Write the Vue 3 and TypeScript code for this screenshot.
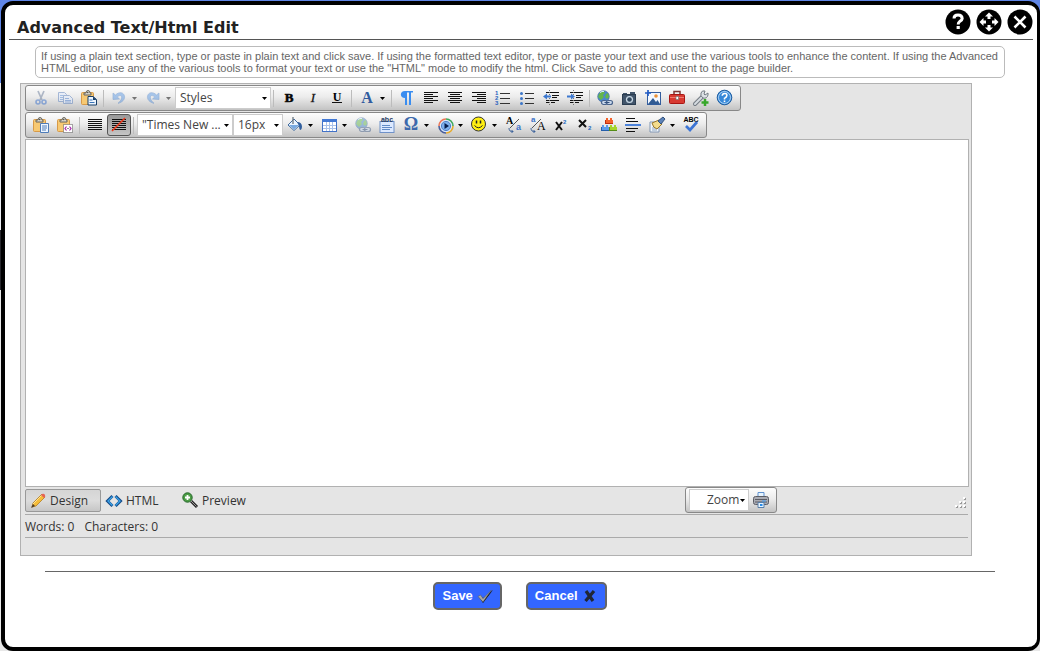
<script setup lang="ts">
import { ref, computed } from 'vue'

interface Item {
  kind: 'button' | 'split' | 'sep' | 'select'
  icon?: string
  label?: string
  active?: boolean
  dim?: boolean
  size?: 'wide' | 'narrow'
  options?: string[]
}

const content = ref('')
const mode = ref('Design')
const words = computed(() => content.value.split(/\s+/).filter(Boolean).length)

const btn = (icon: string, label: string, extra: Partial<Item> = {}): Item => ({ kind: 'button', icon, label, ...extra })
const split = (icon: string, label: string, extra: Partial<Item> = {}): Item => ({ kind: 'split', icon, label, ...extra })
const sep: Item = { kind: 'sep' }

const rows: Item[][] = [
  [
    btn('cut', 'Cut', { dim: true }), btn('copy', 'Copy', { dim: true }), btn('paste', 'Paste'), sep,
    split('undo', 'Undo', { dim: true }), split('redo', 'Redo', { dim: true }),
    { kind: 'select', label: 'Styles', size: 'wide', options: ['Styles', 'Heading', 'Quote'] }, sep,
    btn('bold', 'Bold'), btn('italic', 'Italic'), btn('underline', 'Underline'), sep,
    split('color', 'Text color'), sep,
    btn('pilcrow', 'Paragraph'), btn('left', 'Align left'), btn('center', 'Align center'), btn('right', 'Align right'),
    btn('ol', 'Numbered list'), btn('ul', 'Bulleted list'), btn('outdent', 'Outdent'), btn('indent', 'Indent'), sep,
    btn('link', 'Insert link'), btn('camera', 'Insert media'), btn('image', 'Image map'), btn('toolbox', 'Toolbox'),
    btn('wrench', 'Add tool'), btn('help', 'Help')
  ],
  [
    btn('pasteText', 'Paste plain text'), btn('pasteHtml', 'Paste as HTML'), sep,
    btn('justify', 'Justify'), btn('justifyNone', 'No justification', { active: true }), sep,
    { kind: 'select', label: 'Font', size: 'wide', options: ['"Times New ...', 'Arial', 'Verdana'] },
    { kind: 'select', label: 'Font size', size: 'narrow', options: ['16px', '12px', '14px'] },
    split('bucket', 'Background color'), split('table', 'Insert table'), btn('link', 'Remove link', { dim: true }),
    btn('abcForm', 'Insert snippet'), split('omega', 'Insert symbol'), split('media', 'Insert video'), split('smile', 'Insert emoticon'),
    btn('lower', 'Lower case'), btn('upper', 'Upper case'), btn('sup', 'Superscript'), btn('sub', 'Subscript'),
    btn('blocks', 'Modules'), btn('rule', 'Horizontal rule'), split('brush', 'Format stripper'), btn('spell', 'Spell check')
  ]
]

const line = (d: string, color = '#111') => `<path d="${d}" stroke="${color}" fill="none" shape-rendering="crispEdges"/>`
const clip = '<rect x="0.5" y="2.500" width="12" height="12" rx="1" fill="#f7c973" stroke="#d79a48"/><path d="M3 5V3h2q0-2.500 2-2.500T9 3h1v2z" fill="#d9d6cc" stroke="#68655c"/><circle cx="6.700" cy="2.500" r="0.8" fill="#555"/>'
const nums = (n: string, y: number) => `<text x="0" y="${y}" font-family="Liberation Sans" font-size="6" font-weight="700" fill="#2862bd">${n}</text>`
const brick = (x: number, y: number, fill: string, edge: string) =>
  `<path d="M${x} ${y + 2}h1v-2h2v2h2v-2h2v2h1v4h-8z" fill="${fill}"/><path d="M${x} ${y + 5.5}h8" stroke="${edge}"/><path d="M${x + 0.5} ${y + 2}v4" stroke="${edge}"/>`

const icons: Record<string, string> = {
  cut: '<path d="M5 1l4 9M11 1l-4 9" stroke="#6b7d9b" stroke-width="1.7" fill="none"/><circle cx="5" cy="12" r="2" stroke="#3970cc" stroke-width="1.6" fill="none"/><circle cx="11" cy="12" r="2" stroke="#3970cc" stroke-width="1.6" fill="none"/>',
  copy: '<path d="M1.500 2.500h6l2 2v7h-8z" fill="#e0ebff" stroke="#5b80bd"/><path d="M3 5.500h4M3 7.500h4M3 9.500h3" stroke="#5d8fda"/><path d="M6.500 5.500h6l3 3v5h-9z" fill="#e0ebff" stroke="#5b80bd"/><path d="M8 8.500h4M8 10.500h6M8 12h6" stroke="#4e80d0"/>',
  paste: clip + '<path d="M7 6.500h5l3.500 3v5.500H7z" fill="#eef6ff" stroke="#173e69"/><path d="M12 6.500v3.500h3.500" fill="#173e69"/><path d="M8.500 10h3M8.500 12.500h5" stroke="#3974b8"/>',
  pasteText: clip + '<path d="M7.500 6.500h8v9h-8z" fill="#eef6ff" stroke="#4e7cb8"/><path d="M9 9h5M9 11h5M9 13h4" stroke="#4e7cb8"/>',
  pasteHtml: clip + '<rect x="6.500" y="7.500" width="9" height="8" fill="#fff" stroke="#555" stroke-dasharray="1 1"/><path d="M9.500 9.500L8 11.500l1.500 2M12.500 9.500l1.500 2-1.500 2" stroke="#a626aa" fill="none" stroke-width="1.200"/><path d="M10.500 11.500h1" stroke="#222"/>',
  undo: '<path d="M2 3l0 6.500 6.500-.5-2.200-2c2.500-2.500 5-1.500 4.200 1.300-.5 2-1.500 3.500-3.500 5 4.500-1 7-4 6.500-7C12.700 2 8 1.500 4.500 5z" fill="#5f9be5" stroke="#457bc4" stroke-width=".7"/>',
  redo: '<path d="M14 3l0 6.500-6.500-.5 2.200-2c-2.500-2.500-5-1.500-4.200 1.300.5 2 1.500 3.500 3.500 5-4.500-1-7-4-6.500-7C3.300 2 8 1.500 11.500 5z" fill="#5f9be5" stroke="#457bc4" stroke-width=".7"/>',
  bold: '<text x="8" y="12" text-anchor="middle" font-family="Liberation Serif" font-size="13" font-weight="700" stroke="#111" stroke-width=".6">B</text>',
  italic: '<text x="8" y="12" text-anchor="middle" font-family="Liberation Serif" font-size="13" font-style="italic" stroke="#333" stroke-width=".3">I</text>',
  underline: '<text x="8" y="11" text-anchor="middle" font-family="Liberation Serif" font-size="12" font-weight="700">U</text>' + line('M3 12.500h10'),
  color: '<text x="8" y="13" text-anchor="middle" font-family="Liberation Serif" font-size="16" font-weight="700" fill="#315b9e">A</text>',
  pilcrow: '<path d="M14 1H6C0.500 1 0.500 8 6 8v7h2V2.500h2V15h2V2.500h2z" fill="#3a8df0"/>',
  left: line('M1 2.500h14M1 4.500h9M1 6.500h14M1 8.500h9M1 10.500h14M1 12.500h9'),
  center: line('M1 2.500h14M3 4.500h10M1 6.500h14M3 8.500h10M1 10.500h14M3 12.500h10'),
  right: line('M1 2.500h14M6 4.500h9M1 6.500h14M6 8.500h9M1 10.500h14M6 12.500h9'),
  justify: line('M1 2.500h14M1 4.500h14M1 6.500h14M1 8.500h14M1 10.500h14M1 12.500h14'),
  justifyNone: line('M1 2.500h14M1 4.500h14M1 6.500h14M1 8.500h14M1 10.500h14M1 12.500h14') + '<path d="M1 14L14 1" stroke="#ef3a1c" stroke-width="1.600"/>',
  ol: nums('1', 5) + nums('2', 10) + nums('3', 15) + line('M5 3.500h10M5 8.500h10M5 13.500h10', '#333'),
  ul: '<g fill="#3c76c8"><circle cx="2.500" cy="3.500" r="1.500"/><circle cx="2.500" cy="8.500" r="1.500"/><circle cx="2.500" cy="13.500" r="1.500"/></g>' + line('M6 3.500h9M6 8.500h9M6 13.500h9', '#333'),
  outdent: line('M3 2.500h13M9 5h7M9 7.500h5M3 10.500h13M3 12.500h3M8 12.500h4') + line('M9 5.500h7M9 7.500h5') + '<path d="M6.500 0v16" stroke="#777" stroke-dasharray="1 1"/><path d="M0 6.500l4-3v2h4v2H4v2z" fill="#3d78cf"/>',
  indent: line('M3 2.500h13M3 10.500h13M3 12.500h3M8 12.500h4') + line('M9 5.500h7M9 7.500h5') + '<path d="M6.500 0v16" stroke="#777" stroke-dasharray="1 1"/><path d="M8 6.500l-4-3v2H0v2h4v2z" fill="#3d78cf"/>',
  link: '<circle cx="6.500" cy="6.500" r="5.800" fill="#4a86cf" stroke="#315e93" stroke-width=".6"/><path d="M2 4q2-3 5-3l1 2-2 2 1 2-3 3-3-3zM9 4l2-1 1 4-2 2-2-2z" fill="#64b54c"/><path d="M3 2.500q2-1.500 4-1" stroke="#d6efff" fill="none"/><g fill="#c9d8ec" stroke="#4a648c" stroke-width="1.200"><rect x="4.500" y="10.500" width="5.500" height="4" rx="2"/><rect x="9.500" y="10.500" width="6" height="4" rx="2"/></g><path d="M7.500 12.500h5" stroke="#33507c"/>',
  camera: '<path d="M2 3h4v2H2zM9 2h5v3H9z" fill="#41546a"/><rect x="1.500" y="4.500" width="13" height="10" fill="#41546a" stroke="#2b3d50"/><circle cx="8.500" cy="9.500" r="3.600" fill="#c9d9e6"/><circle cx="8.500" cy="9.500" r="2.300" fill="#31475d"/>',
  image: '<rect x="2.500" y="2.500" width="13" height="12" fill="#f3f8ff" stroke="#335d9d"/><path d="M3 14l5-6 3 4 1.500-2L15 14z" fill="#315b93"/><circle cx="11" cy="6" r="1.800" fill="#ec9136"/><path d="M3 0v6M0 3h6" stroke="#245dc5" stroke-width="1.700"/>',
  toolbox: '<path d="M5 4V1.500h6V4" fill="none" stroke="#7c3835" stroke-width="1.500"/><rect x=".5" y="4.500" width="15" height="9" rx="1" fill="#d83a32" stroke="#a81613"/><path d="M1 7.500h14" stroke="#f07a70"/><path d="M7 6.500h2.500v3H7z" fill="#fff" stroke="#777" stroke-width=".7"/>',
  wrench: '<path d="M2 14L10 6" stroke="#747c84" stroke-width="4" stroke-linecap="round"/><path d="M2 14L10 6" stroke="#d6dce1" stroke-width="2" stroke-linecap="round"/><path d="M12 1q-3-1-4 2t2 5q4 1 5-3V3l-3 2-1-1z" fill="#dce1e5" stroke="#747c84"/><path d="M12 9v7M8.500 12.500h7" stroke="#38a72b" stroke-width="2.500"/>',
  help: '<circle cx="7.500" cy="7.500" r="7.300" fill="#3688d9" stroke="#1e5c9f"/><circle cx="7.500" cy="7.500" r="6" fill="none" stroke="#cce6fb" stroke-width=".8"/><path d="M5.200 5.700q.1-2.300 2.500-2.300 2.300 0 2.200 2Q9.800 7 7.500 8.300v1.200" fill="none" stroke="#fff" stroke-width="1.500"/><path d="M6.700 10.500h1.600v1.600H6.700z" fill="#fff"/>',
  bucket: '<path d="M1 8l6-6 6 6-6 5.500z" fill="#eaf4ff" stroke="#426b9d"/><path d="M2 8h10l-5 4.500z" fill="#78a9e0"/><path d="M6 0v7" stroke="#69757e" stroke-width="1.300"/><path d="M10 5q5 0 5 5-.3 3-1.500 3T12 9z" fill="#315f9e"/>',
  table: '<rect x="1.500" y="2.500" width="14" height="12" fill="#fff" stroke="#4272c7"/><path d="M1 2h15v3H1z" fill="#4379d4"/>' + line('M2 8.500h13M2 11.500h13M5.500 5v9M8.500 5v9M11.500 5v9', '#a9c2ea'),
  abcForm: '<rect x="1" y="4.500" width="14" height="11" fill="#dce9ff" stroke="#6f91c8"/>' + line('M3 8.500h8M3 10.500h10M3 12.500h8', '#628bc6') + '<text x="8" y="5" text-anchor="middle" font-family="Liberation Sans" font-size="7" font-weight="700" fill="#243a62">abc</text>',
  omega: '<text x="8" y="13" text-anchor="middle" font-family="Liberation Serif" font-size="18" font-weight="700" fill="#3c69ac">Ω</text>',
  media: '<circle cx="9" cy="9" r="7" fill="#dbe7fa"/><g fill="none" stroke-width="1.600"><path d="M2 9a7 7 0 0 1 7-7" stroke="#ee7654"/><path d="M9 2a7 7 0 0 1 7 7" stroke="#3fa85a"/><path d="M16 9a7 7 0 0 1-7 7" stroke="#e6aa2b"/><path d="M9 16a7 7 0 0 1-7-7" stroke="#4a5f9a"/></g><circle cx="9" cy="9" r="4.600" fill="#7fb0ec" stroke="#4f82c9"/><path d="M7.500 6l4.500 3-4.500 3z" fill="#071d4b"/>',
  smile: '<circle cx="7.500" cy="7" r="7" fill="#ffef12" stroke="#333"/><path d="M5.500 3.500v3M9.500 3.500v3" stroke="#222" stroke-width="1.500"/><path d="M3.500 8.500q4 4.500 8 0" stroke="#222" fill="none"/>',
  lower: '<text x="1" y="7" font-family="Liberation Serif" font-size="10" font-weight="700">A</text><text x="11" y="13" font-family="Liberation Sans" font-size="9" font-weight="700" fill="#3c72c8">a</text><path d="M14 2L5 11" stroke="#555"/><path d="M4 11q0 4 4 3.500M6.500 13L8 14.500 6.500 16" stroke="#3a6099" fill="none"/>',
  upper: '<text x="2" y="5" font-family="Liberation Sans" font-size="8" font-weight="700" fill="#3c72c8">a</text><text x="8" y="13" font-family="Liberation Serif" font-size="12">A</text><path d="M12 2L3 11" stroke="#555"/><path d="M2 11q0 4 4 3.500M4.500 13L6 14.500 4.500 16" stroke="#3a6099" fill="none"/>',
  sup: '<path d="M3 5l6 8M9 5l-6 8" stroke="#111" stroke-width="2"/><text x="10" y="7" font-family="Liberation Sans" font-size="6" font-weight="700" fill="#2469bf">2</text>',
  sub: '<path d="M2 3l7 7M9 3l-7 7" stroke="#111" stroke-width="2"/><text x="11" y="13" font-family="Liberation Sans" font-size="6" font-weight="700" fill="#2469bf">2</text>',
  blocks: brick(4, 1, '#f3622c', '#bd2d13') + brick(0, 8, '#5b9bec', '#245eaa') + brick(8, 8, '#a6d32a', '#548c16'),
  rule: line('M1 1.500h9M1 4.500h12M1 11.500h12M1 14.500h9') + '<path d="M0 8h16" stroke="#4d83da" stroke-width="2"/>',
  brush: '<path d="M1 5h9v10H1z" fill="#f1f6fb" stroke="#8196b3"/><path d="M3 11h5M3 13h5" stroke="#91a7c2"/><path d="M3 6l7-3 3 4-5 5q-4-1-5-6z" fill="#f3dc8c" stroke="#99772b"/><path d="M9 4l5-4 2 2-4 5z" fill="#5c82b8" stroke="#32517c"/>',
  spell: '<text x="8" y="5" text-anchor="middle" font-family="Liberation Sans" font-size="7" font-weight="700">ABC</text><path d="M3 9l4 4 7-8" stroke="#3c75d5" stroke-width="2.700" fill="none"/>'
}

const modes = [
  { name: 'Design', icon: '<path d="M2 14l1-4L12 1l3 3-9 9z" fill="#f6bd39" stroke="#a97215" stroke-width=".7"/><path d="M3 11L12 2" stroke="#ffe397"/><path d="M1 15l2-4 2 2z" fill="#4b3b2a"/><path d="M11 2l1-1q2-1 3 1t-1 3z" fill="#e56354"/>' },
  { name: 'HTML', icon: '<path d="M6.500 3L1.500 8l5 5M9.500 3l5 5-5 5" stroke="#164b87" stroke-width="3" fill="none"/><path d="M6.500 3.500L2 8l4.500 4.500M9.500 3.500L14 8l-4.500 4.500" stroke="#39a2e9" stroke-width="1.400" fill="none"/>' },
  { name: 'Preview', icon: '<path d="M9 8l6 6" stroke="#252525" stroke-width="3"/><path d="M9 8l5.500 5.500" stroke="#999"/><circle cx="5.500" cy="4.500" r="4.700" fill="#4c9d45" stroke="#246629"/><path d="M5.500 2v5M3 4.500h5" stroke="#fff" stroke-width="1.800"/>' }
]
</script>

<template>
  <main class="dialog">
    <header class="titlebar">
      <h1>Advanced Text/Html Edit</h1>
      <div class="window-actions">
        <button type="button" aria-label="Help">
          <svg viewBox="0 0 26 26"><circle cx="13" cy="13" r="12.500" /><path d="M9 9.500Q9 6 13 6t4.200 3.500Q17 11.500 14.500 12.700 13.200 13.500 13.200 15.500" fill="none" stroke="#fff" stroke-width="3" /><rect x="11.600" y="17" width="3.200" height="3" fill="#fff" /></svg>
        </button>
        <button type="button" aria-label="Move">
          <svg viewBox="0 0 26 26"><circle cx="13" cy="13" r="12.500" /><g fill="#fff"><path d="M13 3.500l4 4h-2.500V10h-3V7.500H9z" /><path d="M13 22.500l-4-4h2.500V16h3v2.500H17z" /><path d="M3.500 13l4-4v2.500H10v3H7.500V17z" /><path d="M22.500 13l-4 4v-2.500H16v-3h2.500V9z" /></g></svg>
        </button>
        <button type="button" aria-label="Close">
          <svg viewBox="0 0 26 26"><circle cx="13" cy="13" r="12.500" /><path d="M7.500 7.500l11 11M18.500 7.500l-11 11" stroke="#fff" stroke-width="2.600" /></svg>
        </button>
      </div>
    </header>

    <p class="hint">If using a plain text section, type or paste in plain text and click save. If using the formatted text editor, type or paste your text and use the various tools to enhance the content. If using the Advanced HTML editor, use any of the various tools to format your text or use the "HTML" mode to modify the html. Click Save to add this content to the page builder.</p>

    <section class="editor" aria-label="Editor">
      <div v-for="(row, r) in rows" :key="r" class="toolbar" role="toolbar">
        <template v-for="(item, i) in row" :key="i">
          <span v-if="item.kind === 'sep'" class="sep"></span>
          <label v-else-if="item.kind === 'select'" class="picker" :class="item.size">
            <select :aria-label="item.label">
              <option v-for="o in item.options" :key="o">{{ o }}</option>
            </select>
            <svg class="caret" viewBox="0 0 5 3"><path d="M0 0h5L2.500 3z" /></svg>
          </label>
          <button v-else type="button" class="tool" :class="{ split: item.kind === 'split', active: item.active, dim: item.dim }" :aria-label="item.label">
            <svg class="icon" viewBox="0 0 16 16" v-html="icons[item.icon ?? '']"></svg>
            <svg v-if="item.kind === 'split'" class="caret" viewBox="0 0 5 3"><path d="M0 0h5L2.500 3z" /></svg>
          </button>
        </template>
      </div>

      <textarea v-model="content" class="canvas" aria-label="Content"></textarea>

      <div class="footer">
        <div class="modes">
          <button v-for="m in modes" :key="m.name" type="button" class="mode" :class="{ current: mode === m.name }" @click="mode = m.name">
            <svg class="icon" viewBox="0 0 16 16" v-html="m.icon"></svg>{{ m.name }}
          </button>
        </div>
        <div class="toolbar zoombar">
          <label class="picker zoom">
            <select aria-label="Zoom"><option>Zoom</option><option>100%</option></select>
            <svg class="caret" viewBox="0 0 5 3"><path d="M0 0h5L2.500 3z" /></svg>
          </label>
          <button type="button" class="tool" aria-label="Print">
            <svg class="icon" viewBox="0 0 16 16"><path d="M5 6V.5h6V6" fill="#e7f4ff" stroke="#5f91cf" /><rect x=".5" y="4.500" width="15" height="8" rx="2" fill="#a9abb3" stroke="#5c5d65" /><path d="M2 7.500h12M2 10h12" stroke="#5c5d65" /><path d="M9 9h4" stroke="#3f9df5" /><path d="M5 10.500h6v5H5z" fill="#e5f4ff" stroke="#5a7fa9" /><path d="M7 13h2.500" stroke="#258bea" stroke-width="2" /></svg>
          </button>
        </div>
        <svg class="grip" viewBox="0 0 12 12" shape-rendering="crispEdges">
          <path d="M9 1h2v2H9zM5 5h2v2H5zM9 5h2v2H9zM1 9h2v2H1zM5 9h2v2H5zM9 9h2v2H9z" fill="#999" />
          <path d="M8 0h2v2H8zM4 4h2v2H4zM8 4h2v2H8zM0 8h2v2H0zM4 8h2v2H4zM8 8h2v2H8z" fill="#fff" />
        </svg>
      </div>
      <div class="stats"><span>Words: {{ words }}</span><span>Characters: {{ content.length }}</span></div>
    </section>

    <div class="actions">
      <button type="button" class="save">Save
        <svg viewBox="0 0 16 16"><path d="M2 9l4 6 10-13-9.500 8z" fill="#111" /><path d="M1 8.500l2.500-1.500L6 10.500 14.500 2 6 14z" fill="#aaa" stroke="#555" stroke-width=".5" /></svg>
      </button>
      <button type="button" class="cancel">Cancel
        <svg viewBox="0 0 16 16"><path d="M4 3l7 10M12 3L3.500 13" stroke="#202635" stroke-width="3.200" /></svg>
      </button>
    </div>
  </main>
</template>

<style>
body {
  background: linear-gradient(#5f85e6 0 83px, #eceef4 83px 230px, #26262c 230px 290px, #e8e8e8 290px);
  background-repeat: no-repeat;
  background-color: #e8e8e8;
}
</style>

<style scoped>
* { box-sizing: border-box; }
button { font: inherit; color: inherit; cursor: pointer; }
.dialog {
  min-height: calc(100vh - 1px);
  margin: 1px 0 0 1px;
  border: 4px solid #000;
  border-right-width: 3px;
  border-radius: 12px;
  background: #fff;
  font-family: "Open Sans", "Noto Sans", sans-serif;
}
.titlebar {
  display: flex;
  justify-content: space-between;
  height: 35px;
  margin: 0 4px;
  padding-left: 8px;
  border-bottom: 1px solid #555;
}
h1 {
  margin: 11px 0 0;
  font: 700 16px/24px "DejaVu Sans", sans-serif;
  color: #222;
}
.window-actions { display: flex; gap: 5px; padding-top: 4px; }
.window-actions button { width: 26px; height: 26px; padding: 0; border: 0; background: none; }
.window-actions svg { display: block; width: 26px; height: 26px; }
.hint {
  margin: 6px 32px 0 30px;
  padding: 3px 5px;
  border: 1px solid #bbb;
  border-radius: 5px;
  font: 11px/12px "Liberation Sans", Arial, sans-serif;
  color: #666;
}
.editor {
  margin: 5px 65px 0 15px;
  padding: 1px 2px 17px 4px;
  border: 1px solid #b1b1b1;
  background: #e5e5e5;
  font-size: 12px;
  color: #333;
}
.toolbar {
  display: flex;
  align-items: center;
  width: max-content;
  height: 26px;
  margin-bottom: 1px;
  padding: 0 3px;
  border: 1px solid #888;
  border-radius: 3px;
  background: linear-gradient(#fdfdfd, #ececec 45%, #c3c3c3);
}
.sep { width: 4px; height: 17px; margin-left: 2px; border-left: 1px solid #bcbcbc; }
.tool {
  display: flex;
  align-items: center;
  justify-content: center;
  width: 24px;
  height: 22px;
  padding: 0;
  border: 0;
  background: none;
}
.tool.split { width: 34px; justify-content: flex-start; gap: 5px; padding-left: 4px; }
.tool.active { border: 1px solid #555; border-radius: 3px; background: linear-gradient(#999, #c5c5c5); }
.tool.dim { opacity: 0.5; }
.icon { flex: none; width: 16px; height: 16px; overflow: visible; }
.caret { flex: none; width: 5px; height: 3px; fill: #000; }
.picker { display: grid; align-items: center; height: 22px; border: 1px solid #ccc; background: #fff; }
.picker > * { grid-area: 1 / 1; }
.picker .caret { justify-self: end; margin-right: 3px; pointer-events: none; }
.picker.wide { width: 96px; }
.picker.narrow { width: 50px; }
select {
  appearance: none;
  width: 100%;
  height: 20px;
  padding: 0 10px 0 4px;
  border: 0;
  background: none;
  font: 12px/20px "Open Sans", "Noto Sans", sans-serif;
  color: #444;
}
.canvas {
  display: block;
  width: 100%;
  height: 348px;
  padding: 8px;
  border: 1px solid #b1b1b1;
  background: #fff;
  resize: none;
  font: 16px "Liberation Serif", serif;
}
.footer {
  display: grid;
  grid-template-columns: 660px max-content 1fr;
  height: 28px;
  margin-right: 1px;
  border-bottom: 1px solid #aaa;
}
.modes { display: flex; padding-top: 2px; }
.mode {
  display: flex;
  align-items: center;
  gap: 4px;
  width: 76px;
  height: 23px;
  padding: 0 4px;
  border: 1px solid transparent;
  border-radius: 2px;
  background: none;
}
.mode.current { border-color: #999; background: linear-gradient(#d5d5d5, #dcdcdc 50%, #c6c6c6); }
.zoombar { margin: 0; }
.picker.zoom { width: 60px; }
.zoom select { padding-left: 17px; padding-right: 0; }
.grip { justify-self: end; align-self: end; width: 12px; height: 12px; margin: 0 1px 5px 0; }
.stats {
  display: flex;
  gap: 10px;
  height: 23px;
  margin-right: 1px;
  border-bottom: 1px solid #aaa;
  line-height: 24px;
}
.actions {
  display: flex;
  justify-content: center;
  gap: 24px;
  margin: 15px 42px 0 40px;
  padding-top: 10px;
  border-top: 1px solid #666;
}
.actions button {
  display: flex;
  align-items: center;
  gap: 4px;
  height: 28px;
  padding: 0 7px 1px;
  border: 2px solid #666;
  border-radius: 5px;
  background: #36f;
  font: 700 13px "Liberation Sans", Arial, sans-serif;
  color: #fff;
}
.actions svg { width: 16px; height: 16px; }
</style>
